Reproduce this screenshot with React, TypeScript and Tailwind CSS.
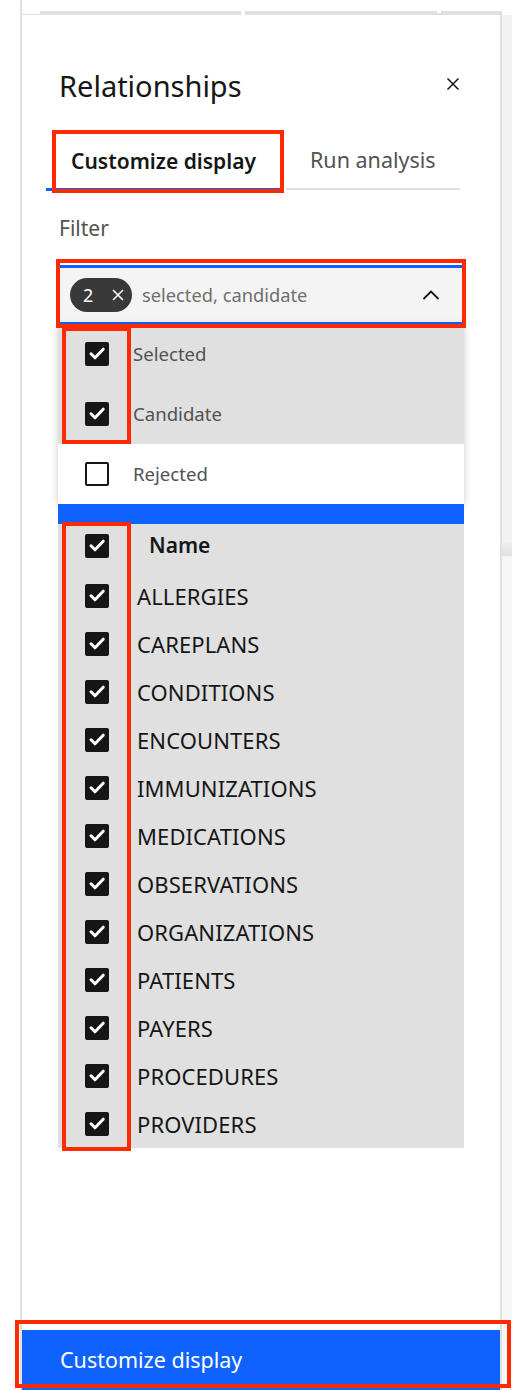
import { Fragment } from "react";

const tables = [
  "ALLERGIES",
  "CAREPLANS",
  "CONDITIONS",
  "ENCOUNTERS",
  "IMMUNIZATIONS",
  "MEDICATIONS",
  "OBSERVATIONS",
  "ORGANIZATIONS",
  "PATIENTS",
  "PAYERS",
  "PROCEDURES",
  "PROVIDERS",
];

const filters = [
  { label: "Selected", checked: true },
  { label: "Candidate", checked: true },
  { label: "Rejected", checked: false },
];

const CheckBox = ({ checked }: { checked: boolean }) => {
  if (!checked) {
    return <span className="block h-[24px] w-[24px] shrink-0 rounded-[2px] border-2 border-[#161616] bg-white" />;
  }
  return (
    <span className="flex h-[24px] w-[24px] shrink-0 items-center justify-center rounded-[2px] bg-[#161616]">
      <svg width="24" height="24" viewBox="0 0 24 24">
        <path
          d="M6 11.8 L10 15.8 L18.2 7.2"
          fill="none"
          stroke="white"
          strokeWidth="3"
          strokeLinecap="round"
          strokeLinejoin="round"
        />
      </svg>
    </span>
  );
};

export default function App() {
  return (
    <div className="relative flex h-[1390px] w-[512px] overflow-hidden bg-white font-['Noto_Sans',sans-serif] text-[#161616]">
      <div className="w-[20px] shrink-0" />
      <div className="flex w-[482px] shrink-0 flex-col border-l-2 border-[#e0e0e0]">
        {/* strip at the top */}
        <div className="flex h-[15px] shrink-0 items-end">
          <div className="h-[1px] w-[18px] bg-[#e0e0e0]" />
          <div className="h-[4px] w-[201px] bg-[#e0e0e0]" />
          <div className="h-[4px] w-[4px] bg-white" />
          <div className="h-[4px] w-[192px] bg-[#e0e0e0]" />
          <div className="h-[2px] w-[4px] bg-[#e0e0e0]" />
          <div className="h-[4px] flex-1 bg-[#e0e0e0]" />
        </div>

        <div className="flex flex-1 flex-col border-r-2 border-[#e0e0e0]">
          <div className="flex items-center justify-between pl-[37px] pr-[40px] pt-[53px]">
            <h2 className="text-[29px] leading-[36px] font-normal">Relationships</h2>
            <svg width="14" height="14" viewBox="0 0 14 14" className="mt-[-4px]">
              <path d="M1.5 1.5 L12.5 12.5 M12.5 1.5 L1.5 12.5" stroke="#161616" strokeWidth="1.5" />
            </svg>
          </div>

          {/* tabs */}
          <div className="mt-[29px] flex pl-[24px]">
            <div className="flex h-[58px] w-[237px] items-center border-b-[3px] border-[#0f62fe] pl-[25px] pt-[2px] text-[21px] font-semibold">
              Customize display
            </div>
            <div className="ml-[3px] mt-[-1px] flex h-[58px] w-[174px] items-center border-b-2 border-[#e0e0e0] pl-[24px] text-[21.5px] text-[#525252]">
              Run analysis
            </div>
          </div>

          <div className="pl-[37px] pt-[25px] text-[21px] leading-[24px] text-[#525252]">Filter</div>

          <div className="mt-[25px] ml-[36px] w-[406px]">
            <div className="mx-[2px] flex h-[59px] items-center border-t-[3px] border-b-2 border-[#0f62fe] bg-[#f4f4f4] pl-[10px] pr-[22px]">
              <span className="flex h-[34px] w-[62px] items-center rounded-full bg-[#393939] pl-[13px] text-[18px] text-white">
                2
                <svg width="14" height="14" viewBox="0 0 14 14" className="ml-[18px]">
                  <path d="M2 2 L12 12 M12 2 L2 12" stroke="white" strokeWidth="1.6" />
                </svg>
              </span>
              <span className="ml-[10px] text-[18.3px] text-[#6f6f6f]">selected, candidate</span>
              <svg width="18" height="10" viewBox="0 0 18 10" className="ml-auto">
                <path d="M1.5 9 L9 1.5 L16.5 9" fill="none" stroke="#161616" strokeWidth="1.8" />
              </svg>
            </div>

            <div className="shadow-[0_2px_8px_rgba(0,0,0,0.2)]">
              {filters.map((f) => (
                <div
                  key={f.label}
                  className={`flex h-[60px] items-center pl-[27px] ${f.checked ? "bg-[#e0e0e0]" : "bg-white"}`}
                >
                  <CheckBox checked={f.checked} />
                  <span className="ml-[24px] text-[18.6px] text-[#525252]">{f.label}</span>
                </div>
              ))}
            </div>

            <div className="h-[20px] bg-[#0f62fe]" />

            <div className="bg-[#e0e0e0]">
              <div className="flex h-[48px] items-center pb-[4px] pl-[27px]">
                <CheckBox checked />
                <span className="ml-[40px] text-[21px] font-semibold">Name</span>
              </div>
              {tables.map((t) => (
                <Fragment key={t}>
                  <div className="flex h-[48px] items-center pl-[27px]">
                    <CheckBox checked />
                    <span className="ml-[28px] text-[22px] tracking-[0.1px]">{t}</span>
                  </div>
                </Fragment>
              ))}
            </div>
          </div>

          <button className="mt-auto flex h-[60px] w-full items-center bg-[#0f62fe] pl-[38px] text-left text-[21.5px] text-white">
            Customize display
          </button>
        </div>
      </div>
      <div className="mt-[15px] flex flex-1 flex-col">
        <div className="h-[527px] bg-[#f2f2f2]" />
        <div className="h-[14px] bg-gradient-to-b from-[#f0f0f0] to-[#e0e0e0]" />
        <div className="flex-1 bg-[#f6f6f6]" />
      </div>

      {/* annotation boxes */}
      <div className="pointer-events-none absolute left-[52px] top-[130px] h-[63px] w-[232px] border-4 border-[#ff2a00]" />
      <div className="pointer-events-none absolute left-[56px] top-[259px] h-[69px] w-[410px] border-4 border-[#ff2a00]" />
      <div className="pointer-events-none absolute left-[62px] top-[327px] h-[117px] w-[69px] border-4 border-[#ff2a00]" />
      <div className="pointer-events-none absolute left-[62px] top-[522px] h-[629px] w-[69px] border-4 border-[#ff2a00]" />
      <div className="pointer-events-none absolute left-[15px] top-[1320px] h-[68px] w-[496px] border-4 border-[#ff2a00]" />
    </div>
  );
}
